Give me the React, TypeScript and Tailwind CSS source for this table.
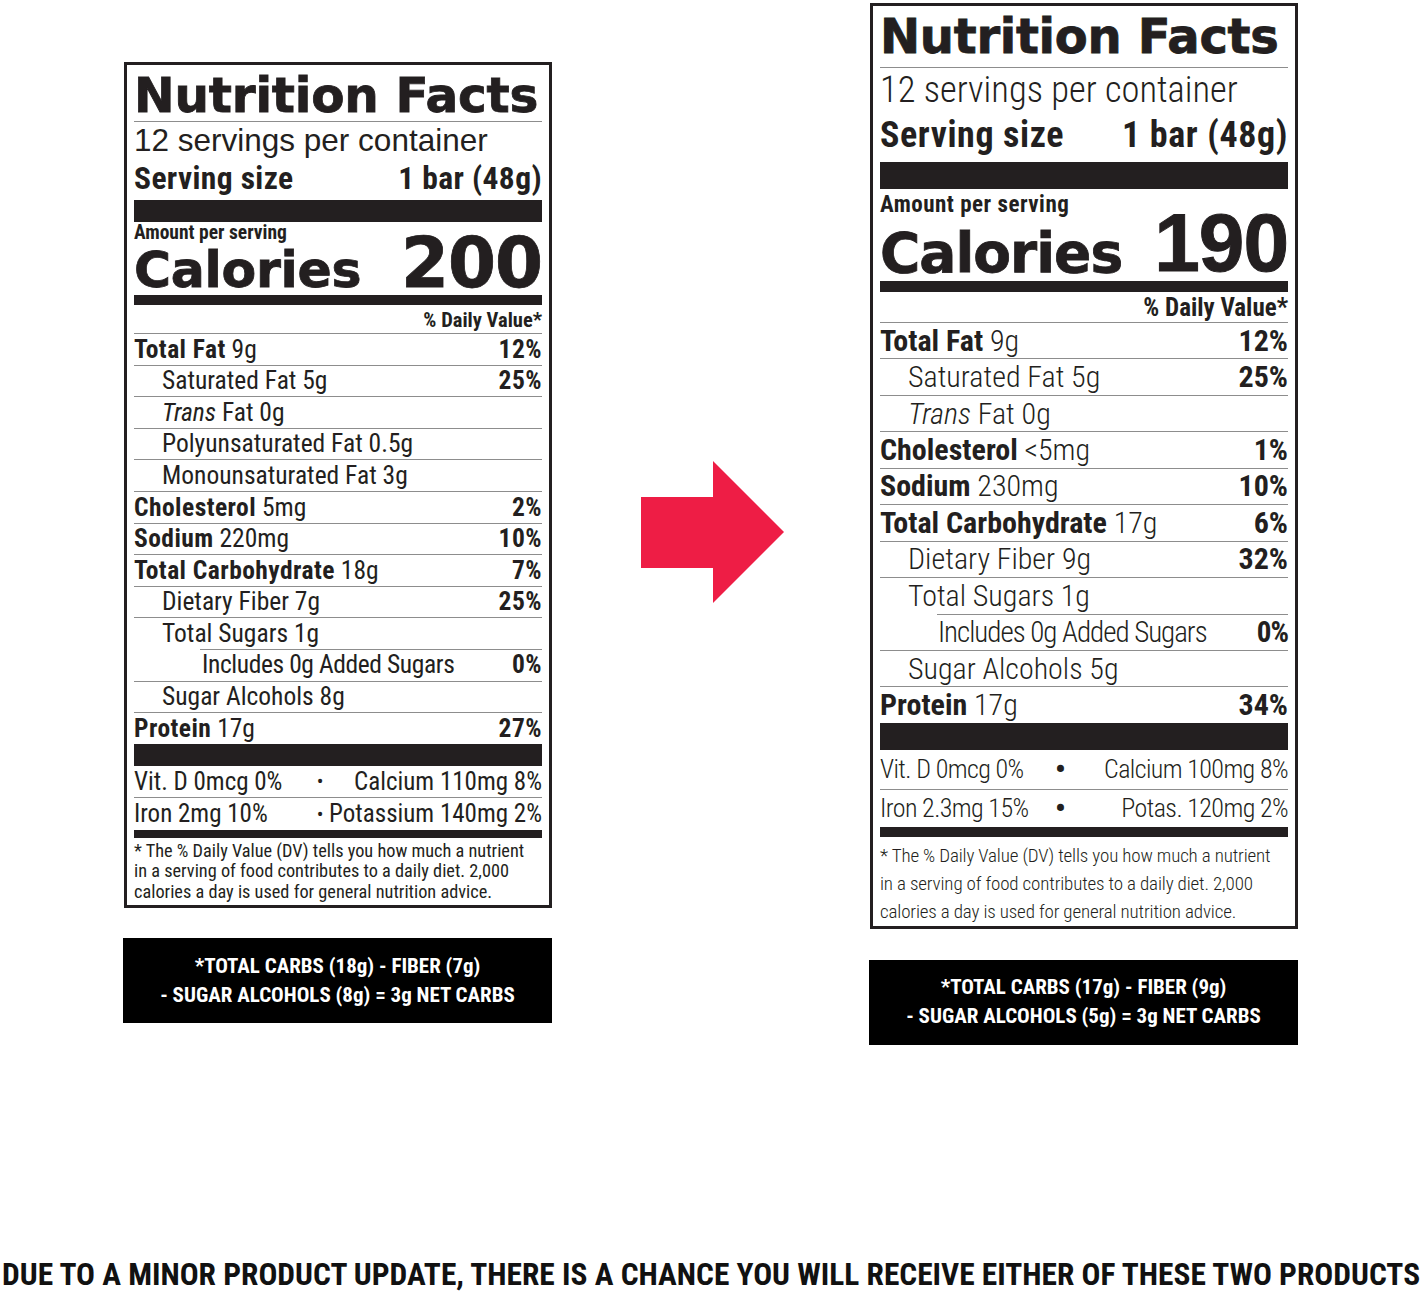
import React from "react"

const cond = "font-['Roboto_Condensed','Roboto',sans-serif]"
const heavy = "font-['DejaVu_Sans','Liberation_Sans',sans-serif] font-bold [-webkit-text-stroke:0.8px_#231f20]"
const line = "border-[#8d8d8d]"

type Nutrient = {
  name: string
  amount: string
  dv?: string
  bold?: boolean
  level?: 0 | 1 | 2
  italic?: string
}

type LabelData = {
  calories: string
  rows: Nutrient[]
  vit: [string, string][]
  carbs: [string, string]
}

type LabelStyle = {
  col: string
  weight: string
  titleBox: string
  title: string
  servings: string
  servingSize: string
  bigBar: string
  calRow: string
  amount: string
  calories: string
  calNum: string
  medBar: string
  dv: string
  row: string
  bold: string
  indent1: string
  indent2: string
  lowBar: string
  vitGrid: string
  vit1: string
  vit2: string
  dot: string
  smallBar: string
  note: string
  box: string
}

const oldBar: LabelData = {
  calories: "200",
  rows: [
    { name: "Total Fat", amount: "9g", dv: "12%", bold: true },
    { name: "Saturated Fat", amount: "5g", dv: "25%", level: 1 },
    { name: "Fat", amount: "0g", level: 1, italic: "Trans" },
    { name: "Polyunsaturated Fat", amount: "0.5g", level: 1 },
    { name: "Monounsaturated Fat", amount: "3g", level: 1 },
    { name: "Cholesterol", amount: "5mg", dv: "2%", bold: true },
    { name: "Sodium", amount: "220mg", dv: "10%", bold: true },
    { name: "Total Carbohydrate", amount: "18g", dv: "7%", bold: true },
    { name: "Dietary Fiber", amount: "7g", dv: "25%", level: 1 },
    { name: "Total Sugars", amount: "1g", level: 1 },
    { name: "Includes 0g Added Sugars", amount: "", dv: "0%", level: 2 },
    { name: "Sugar Alcohols", amount: "8g", level: 1 },
    { name: "Protein", amount: "17g", dv: "27%", bold: true },
  ],
  vit: [
    ["Vit. D 0mcg 0%", "Calcium 110mg 8%"],
    ["Iron 2mg 10%", "Potassium 140mg 2%"],
  ],
  carbs: ["*TOTAL CARBS (18g) - FIBER (7g)", "- SUGAR ALCOHOLS (8g) = 3g NET CARBS"],
}

const newBar: LabelData = {
  calories: "190",
  rows: [
    { name: "Total Fat", amount: "9g", dv: "12%", bold: true },
    { name: "Saturated Fat", amount: "5g", dv: "25%", level: 1 },
    { name: "Fat", amount: "0g", level: 1, italic: "Trans" },
    { name: "Cholesterol", amount: "<5mg", dv: "1%", bold: true },
    { name: "Sodium", amount: "230mg", dv: "10%", bold: true },
    { name: "Total Carbohydrate", amount: "17g", dv: "6%", bold: true },
    { name: "Dietary Fiber", amount: "9g", dv: "32%", level: 1 },
    { name: "Total Sugars", amount: "1g", level: 1 },
    { name: "Includes 0g Added Sugars", amount: "", dv: "0%", level: 2 },
    { name: "Sugar Alcohols", amount: "5g", level: 1 },
    { name: "Protein", amount: "17g", dv: "34%", bold: true },
  ],
  vit: [
    ["Vit. D 0mcg 0%", "Calcium 100mg 8%"],
    ["Iron 2.3mg 15%", "Potas. 120mg 2%"],
  ],
  carbs: ["*TOTAL CARBS (17g) - FIBER (9g)", "- SUGAR ALCOHOLS (5g) = 3g NET CARBS"],
}

const leftStyle: LabelStyle = {
  col: "mt-[62px]",
  weight: "font-normal",
  titleBox: "h-[57px] pb-[2px]",
  title: "text-[48.5px] tracking-[-0.2px]",
  servings: "mt-[3px] h-[32px] font-['Liberation_Sans',sans-serif] text-[31.5px]",
  servingSize: "mt-[6px] h-[31px] text-[31.5px] tracking-[0.4px]",
  bigBar: "mt-[6px] h-[22px]",
  calRow: "h-[73px]",
  amount: "mb-[2px] text-[19.5px]",
  calories: "text-[50.5px] tracking-[-0.3px]",
  calNum: "mb-[-2.6px] font-['DejaVu_Sans',sans-serif] text-[69px] tracking-[-1px]",
  medBar: "h-[10px]",
  dv: "h-[28px] pt-[5px] text-[20.5px]",
  row: "h-[31.6px] text-[25.5px]",
  bold: "tracking-[0.45px]",
  indent1: "pl-[28px]",
  indent2: "ml-[66px] pl-[2px] tracking-[-0.4px]",
  lowBar: "h-[22px]",
  vitGrid: "grid-cols-[180px_12px_1fr] text-[25px]",
  vit1: "h-[31px]",
  vit2: "h-[33px]",
  dot: "text-[20px]",
  smallBar: "h-[8px]",
  note: "pt-[3px] pb-[3px] text-[18.3px] leading-[20.5px]",
  box: "mt-[30px] h-[85px]",
}

const rightStyle: LabelStyle = {
  col: "mt-[3px]",
  weight: "font-light",
  titleBox: "h-[62px] pb-[7px]",
  title: "text-[48px] tracking-[-0.3px]",
  servings: "mt-[4px] h-[37px] text-[36.5px]",
  servingSize: "mt-[8px] h-[36px] text-[36px] tracking-[0.6px]",
  bigBar: "mt-[9px] h-[27px]",
  calRow: "h-[92px]",
  amount: "text-[23px] tracking-[0.5px]",
  calories: "mt-[10px] text-[55px] tracking-[-1px]",
  calNum: "mb-[-2.6px] font-['Liberation_Sans',sans-serif] text-[82px] tracking-[-1px] [-webkit-text-stroke:1px_#231f20]",
  medBar: "h-[11px]",
  dv: "h-[30px] pt-[3px] text-[25px]",
  row: "h-[36.45px] text-[30px]",
  bold: "",
  indent1: "pl-[28px]",
  indent2: "ml-[57px] pl-[1px] text-[29px] tracking-[-1px]",
  lowBar: "h-[27px]",
  vitGrid: "grid-cols-[174px_12px_1fr] text-[26px] tracking-[-0.6px]",
  vit1: "h-[39px]",
  vit2: "h-[38px]",
  dot: "text-[30px] font-bold",
  smallBar: "h-[10px]",
  note: "pt-[5px] text-[19px] leading-[28px] tracking-[-0.15px]",
  box: "mt-[31px] h-[85px]",
}

function NutrientRow({ n, s }: { n: Nutrient; s: LabelStyle }) {
  const content = (
    <>
      <span className="whitespace-nowrap">
        {n.italic && <i>{n.italic} </i>}
        {n.bold ? <span className={`font-bold ${s.bold}`}>{n.name}</span> : n.name}
        {n.amount && ` ${n.amount}`}
      </span>
      {n.dv && <span className={`font-bold ${s.bold}`}>{n.dv}</span>}
    </>
  )

  if (n.level === 2) {
    return (
      <div className={`flex leading-none ${s.row}`}>
        <div className={`flex flex-1 items-center justify-between border-t ${line} ${s.indent2}`}>
          {content}
        </div>
      </div>
    )
  }

  return (
    <div
      className={`flex items-center justify-between border-t leading-none ${line} ${s.row} ${n.level === 1 ? s.indent1 : ""}`}
    >
      {content}
    </div>
  )
}

function Label({ d, s }: { d: LabelData; s: LabelStyle }) {
  return (
    <div className={`flex w-[429px] shrink-0 flex-col ${s.col}`}>
      <div
        className={`ml-[1px] w-[428px] border-[3px] border-[#231f20] bg-white px-[7px] text-[#231f20] ${cond} ${s.weight}`}
      >
        <div className={`flex items-end border-b ${line} ${s.titleBox}`}>
          <h1 className={`whitespace-nowrap leading-none ${heavy} ${s.title}`}>Nutrition Facts</h1>
        </div>

        <p className={`whitespace-nowrap leading-none ${s.servings}`}>12 servings per container</p>

        <div className={`flex justify-between font-bold leading-none ${s.servingSize}`}>
          <span>Serving size</span>
          <span>1 bar (48g)</span>
        </div>

        <div className={`bg-[#231f20] ${s.bigBar}`} />

        {/* Amount per serving sits on top of "Calories", the number spans both */}
        <div className={`flex items-end justify-between ${s.calRow}`}>
          <div className="flex flex-col">
            <span className={`whitespace-nowrap font-bold leading-none ${s.amount}`}>Amount per serving</span>
            <span className={`leading-none ${heavy} ${s.calories}`}>Calories</span>
          </div>
          <span className={`font-bold leading-none [-webkit-text-stroke:0.8px_#231f20] ${s.calNum}`}>
            {d.calories}
          </span>
        </div>

        <div className={`bg-[#231f20] ${s.medBar}`} />

        <div className={`text-right font-bold leading-none ${s.dv}`}>% Daily Value*</div>

        {d.rows.map((n) => (
          <NutrientRow key={n.name + n.amount} n={n} s={s} />
        ))}

        <div className={`bg-[#231f20] ${s.lowBar}`} />

        {d.vit.map(([a, b], i) => (
          <div
            key={a}
            className={`grid items-center leading-none ${s.vitGrid} ${i === 0 ? s.vit1 : `border-t ${line} ${s.vit2}`}`}
          >
            <span className="whitespace-nowrap">{a}</span>
            <span className={`text-center ${s.dot}`}>•</span>
            <span className="whitespace-nowrap text-right">{b}</span>
          </div>
        ))}

        <div className={`bg-[#231f20] ${s.smallBar}`} />

        <p className={`whitespace-nowrap ${s.note}`}>
          * The % Daily Value (DV) tells you how much a nutrient
          <br />
          in a serving of food contributes to a daily diet. 2,000
          <br />
          calories a day is used for general nutrition advice.
        </p>
      </div>

      <div
        className={`flex flex-col items-center justify-center bg-black text-[21px] font-bold leading-[29px] text-white ${cond} ${s.box}`}
      >
        <span className="whitespace-nowrap">{d.carbs[0]}</span>
        <span className="whitespace-nowrap">{d.carbs[1]}</span>
      </div>
    </div>
  )
}

function Arrow() {
  return (
    <svg width="143" height="142" viewBox="0 0 143 142" className="ml-[89px] mt-[461px] shrink-0">
      <path d="M0 36 H72 V0 L143 71 L72 142 V107 H0 Z" fill="#ee1d45" />
    </svg>
  )
}

export default function App() {
  return (
    <div className="flex h-[1291px] w-[1425px] flex-col overflow-hidden bg-white">
      <div className="flex items-start pl-[123px]">
        <Label d={oldBar} s={leftStyle} />
        <Arrow />
        <div className="ml-[85px]">
          <Label d={newBar} s={rightStyle} />
        </div>
      </div>

      <p
        className={`mt-auto w-full whitespace-nowrap pb-[1px] pl-[2px] text-[31.4px] font-bold leading-none text-[#111] ${cond}`}
      >
        DUE TO A MINOR PRODUCT UPDATE, THERE IS A CHANCE YOU WILL RECEIVE EITHER OF THESE TWO PRODUCTS
      </p>
    </div>
  )
}
